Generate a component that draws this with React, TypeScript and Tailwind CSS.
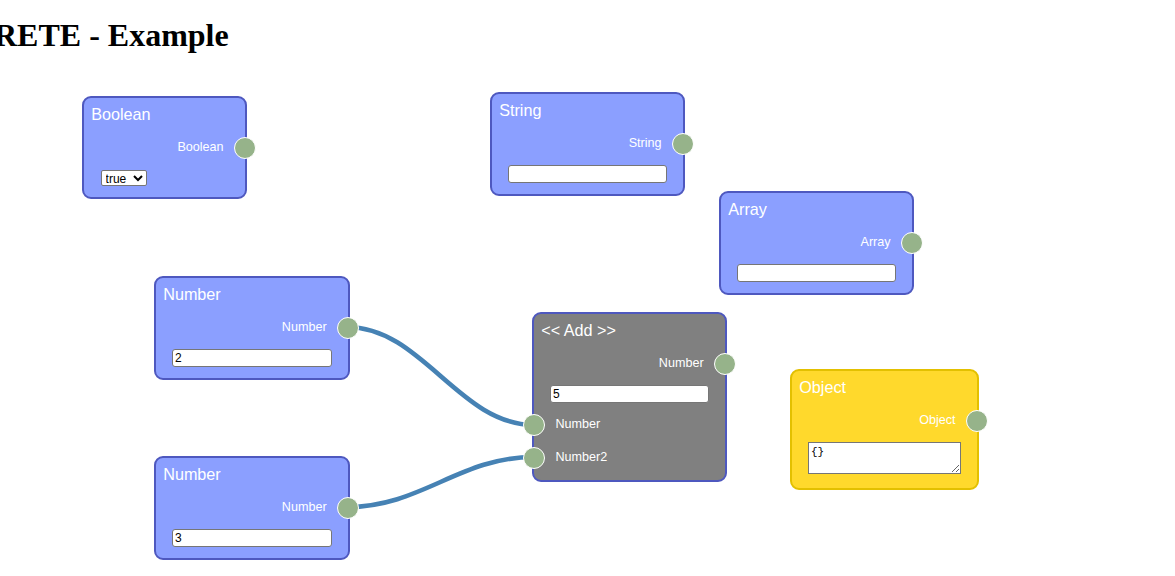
import React from 'react';

type NodeProps = {
	pos: string;
	title: string;
	tone?: 'blue' | 'gray' | 'yellow';
	children: React.ReactNode;
};

const toneClass = {
	blue: 'bg-[#8b9fff] border-[#4e58bf]',
	gray: 'bg-[#808080] border-[#4e58bf]',
	yellow: 'bg-[#ffd92c] border-[#e3c000]',
};

function Socket({ side }: { side: 'in' | 'out' }) {
	return (
		<span
			className={
				'relative z-10 inline-block h-[22px] w-[22px] shrink-0 rounded-full border border-white bg-[#96b38a] ' +
				(side === 'out' ? 'ml-[5px] mr-[-11px]' : 'ml-[-11px] mr-[5px]')
			}
		/>
	);
}

function Output({ label }: { label: string }) {
	return (
		<div className="flex h-[32.4px] items-center justify-end">
			<span className="mx-[5.4px] text-[12.6px] leading-[21.6px] text-white">{label}</span>
			<Socket side="out" />
		</div>
	);
}

function Input({ label }: { label: string }) {
	return (
		<div className="flex h-[32.6px] items-center">
			<Socket side="in" />
			<span className="mx-[5.4px] text-[12.6px] leading-[21.6px] text-white">{label}</span>
		</div>
	);
}

function Field({ value }: { value: string }) {
	return (
		<div className="px-[16px] pb-[5.4px] pt-[5px]">
			<input
				readOnly
				value={value}
				className="block h-[18px] w-full rounded-[3px] border border-[#767676] bg-white px-[2px] text-[12px] text-black"
			/>
		</div>
	);
}

function Node({ pos, title, tone = 'blue', children }: NodeProps) {
	return (
		<div
			className={
				'absolute rounded-[9px] border-2 pb-[5.6px] font-["Liberation_Sans",Arial,sans-serif] ' +
				toneClass[tone] +
				' ' +
				pos
			}
		>
			<div className="px-[7.2px] pb-[8px] pt-[7.4px] text-[16.2px] leading-[1.15] text-white">{title}</div>
			{children}
		</div>
	);
}

export default function App() {
	return (
		<div className="relative h-[576px] w-full overflow-hidden bg-white">
			<h1 className="ml-[-6px] mt-[17px] font-['Liberation_Serif','Times_New_Roman',serif] text-[32px] font-bold leading-[36px] text-black">
				RETE - Example
			</h1>

			<svg className="absolute left-0 top-0" width="1175" height="576">
				<path
					d="M347 327 C421.8 327 459.2 425 534 425"
					fill="none"
					stroke="#4682b4"
					strokeWidth="4.6"
				/>
				<path
					d="M347 507 C421.8 507 459.2 457 534 457"
					fill="none"
					stroke="#4682b4"
					strokeWidth="4.6"
				/>
			</svg>

			<Node pos="left-[82px] top-[96px] w-[165px]" title="Boolean">
				<Output label="Boolean" />
				<div className="px-[16.6px] py-[5.4px]">
					<select
						defaultValue="true"
						className="block h-[16px] w-[46px] rounded-[2px] border border-[#767676] bg-white text-[12px] leading-[14px] text-black"
					>
						<option value="true">true</option>
						<option value="false">false</option>
					</select>
				</div>
			</Node>

			<Node pos="left-[490px] top-[92px] w-[195px]" title="String">
				<Output label="String" />
				<Field value="" />
			</Node>

			<Node pos="left-[719px] top-[191px] w-[195px]" title="Array">
				<Output label="Array" />
				<Field value="" />
			</Node>

			<Node pos="left-[154px] top-[276px] w-[196px]" title="Number">
				<Output label="Number" />
				<Field value="2" />
			</Node>

			<Node pos="left-[154px] top-[456px] w-[196px]" title="Number">
				<Output label="Number" />
				<Field value="3" />
			</Node>

			<Node pos="left-[532px] top-[312px] w-[195px]" title="<< Add >>" tone="gray">
				<Output label="Number" />
				<Field value="5" />
				<Input label="Number" />
				<Input label="Number2" />
			</Node>

			<Node pos="left-[790px] top-[369px] w-[189px]" title="Object" tone="yellow">
				<Output label="Object" />
				<div className="px-[16px] pb-[8px] pt-[5px]">
					<textarea
						readOnly
						value="{}"
						className="block h-[32px] w-full border border-[#767676] bg-white px-[2px] py-[1px] font-['Liberation_Mono',monospace] text-[11px] text-black"
					/>
				</div>
			</Node>
		</div>
	);
}
